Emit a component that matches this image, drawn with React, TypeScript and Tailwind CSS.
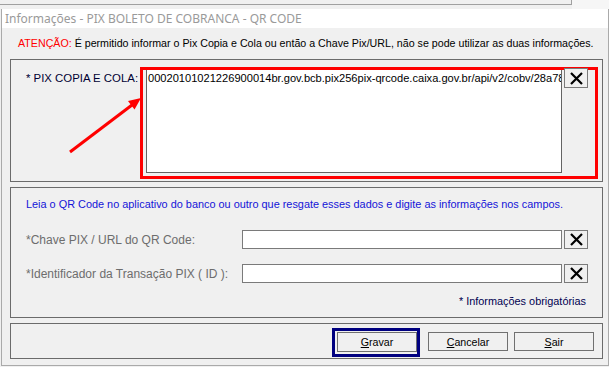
import React from "react";

const XGlyph = () => (
  <svg width="13" height="13" viewBox="0 0 13 13" aria-hidden="true">
    <path d="M1 1 L12 12 M12 1 L1 12" stroke="#000" strokeWidth="2.2" fill="none" />
  </svg>
);

export default function App() {
  return (
    <div className="relative w-[609px] h-[367px] overflow-hidden bg-[#f0f0f0] font-['Liberation_Sans',Arial,sans-serif] text-black">
      {/* background application strip */}
      <div className="h-[9px] flex">
        <div className="w-[572px] h-[5px] border-b border-r border-[#a0a0a0]" />
        <div className="flex-1 h-[9px] bg-[#f6f6f6]" />
      </div>

      {/* dialog window */}
      <div className="ml-[1px] w-[608px] h-[357px] border-l border-r border-b border-[#aaaaaa] flex flex-col">
        <div className="h-[19px] bg-white flex items-center pl-[3px] text-[#9a9a9a] text-[12px] font-['Noto_Sans',sans-serif] whitespace-nowrap">
          Informações - PIX BOLETO DE COBRANCA - QR CODE
        </div>

        <div className="flex-1 flex flex-col pl-[8px] pr-[5px] pt-[9px]">
          <div className="ml-[8px] text-[10.67px] leading-[13px] whitespace-nowrap">
            <span className="text-[#ff0000]">ATENÇÃO:</span> É permitido informar o Pix Copia e Cola ou então a Chave Pix/URL, não se pode utilizar as duas informações.
          </div>

          {/* group 1 */}
          <div className="relative mt-[9px] h-[123px] border border-[#6b6b6b] flex items-start pl-[15px] pt-[9px]">
            <div className="w-[120px] mt-[3px] text-[11.4px] leading-[13px] text-[#000033] whitespace-nowrap">
              * PIX COPIA E COLA:
            </div>
            <div className="w-[416px] h-[104px] bg-white border border-[#646464] pl-[1px] pt-[2px] text-[11.1px] leading-[12px] whitespace-nowrap overflow-hidden">
              00020101021226900014br.gov.bcb.pix256pix-qrcode.caixa.gov.br/api/v2/cobv/28a78
            </div>
            <div className="absolute left-[129px] top-[7px] w-[458px] h-[112px] border-[3px] border-[#ff0000]" />
            <div className="relative z-10 ml-[2px] -mt-[1px] w-[24px] h-[20px] border border-[#7a7a7a] bg-[#f0f0f0] flex items-center justify-center">
              <XGlyph />
            </div>
          </div>

          {/* group 2 */}
          <div className="mt-[5px] h-[131px] border border-[#6b6b6b] flex flex-col pl-[15px] pt-[10px]">
            <div className="text-[10.9px] leading-[13px] text-[#1414d8] whitespace-nowrap">
              Leia o QR Code no aplicativo do banco ou outro que resgate esses dados e digite as informações nos campos.
            </div>
            <div className="mt-[19px] flex items-center h-[19px]">
              <div className="w-[216px] text-[12px] leading-[14px] text-[#6d6d6d] whitespace-nowrap">*Chave PIX / URL do QR Code:</div>
              <div className="w-[320px] h-[19px] bg-white border border-[#7a7a7a]" />
              <div className="ml-[2px] w-[24px] h-[19px] border border-[#7a7a7a] bg-[#f0f0f0] flex items-center justify-center">
                <XGlyph />
              </div>
            </div>
            <div className="mt-[15px] flex items-center h-[19px]">
              <div className="w-[216px] text-[12px] leading-[14px] text-[#6d6d6d] whitespace-nowrap">*Identificador da Transação PIX ( ID ):</div>
              <div className="w-[320px] h-[19px] bg-white border border-[#7a7a7a]" />
              <div className="ml-[2px] w-[24px] h-[19px] border border-[#7a7a7a] bg-[#f0f0f0] flex items-center justify-center">
                <XGlyph />
              </div>
            </div>
            <div className="mt-[12px] pr-[16px] text-right text-[10.9px] leading-[13px] text-[#000050] whitespace-nowrap">
              * Informações obrigatórias
            </div>
          </div>

          {/* group 3 - buttons */}
          <div className="mt-[5px] h-[36px] border border-[#6b6b6b] flex justify-end items-start pr-[8px]">
            <div className="mt-[4px] w-[88px] h-[29px] border-[3px] border-[#000080] pl-[2px] pt-[1px]">
              <div className="w-[80px] h-[20px] border border-[#707070] bg-[#f0f0f0] flex items-center justify-center text-[10.67px] leading-[12px]">
                <span><span className="underline">G</span>ravar</span>
              </div>
            </div>
            <div className="mt-[8px] ml-[8px] w-[80px] h-[19px] border border-[#707070] bg-[#f0f0f0] flex items-center justify-center text-[10.67px] leading-[12px]">
              <span><span className="underline">C</span>ancelar</span>
            </div>
            <div className="mt-[8px] ml-[6px] w-[80px] h-[19px] border border-[#707070] bg-[#f0f0f0] flex items-center justify-center text-[10.67px] leading-[12px]">
              <span><span className="underline">S</span>air</span>
            </div>
          </div>
        </div>
      </div>

      {/* red annotation arrow */}
      <svg className="absolute left-0 top-0 pointer-events-none" width="609" height="367" aria-hidden="true">
        <line x1="70" y1="152" x2="132" y2="105" stroke="#ff0000" strokeWidth="3" />
        <polygon points="141,98 134.5,109.5 128,101" fill="#ff0000" />
      </svg>
    </div>
  );
}
